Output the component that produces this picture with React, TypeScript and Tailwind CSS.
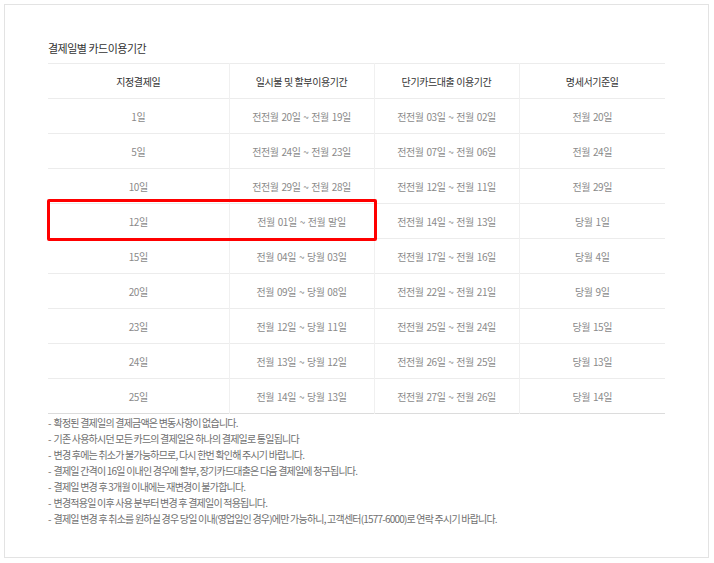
const headers = ['지정결제일', '일시불 및 할부이용기간', '단기카드대출 이용기간', '명세서기준일'];

const rows = [
    ['1일', '전전월 20일 ~ 전월 19일', '전전월 03일 ~ 전월 02일', '전월 20일'],
    ['5일', '전전월 24일 ~ 전월 23일', '전전월 07일 ~ 전월 06일', '전월 24일'],
    ['10일', '전전월 29일 ~ 전월 28일', '전전월 12일 ~ 전월 11일', '전월 29일'],
    ['12일', '전월 01일 ~ 전월 말일', '전전월 14일 ~ 전월 13일', '당월 1일'],
    ['15일', '전월 04일 ~ 당월 03일', '전전월 17일 ~ 전월 16일', '당월 4일'],
    ['20일', '전월 09일 ~ 당월 08일', '전전월 22일 ~ 전월 21일', '당월 9일'],
    ['23일', '전월 12일 ~ 당월 11일', '전전월 25일 ~ 전월 24일', '당월 15일'],
    ['24일', '전월 13일 ~ 당월 12일', '전전월 26일 ~ 전월 25일', '당월 13일'],
    ['25일', '전월 14일 ~ 당월 13일', '전전월 27일 ~ 전월 26일', '당월 14일'],
];

const notes = [
    '확정된 결제일의 결제금액은 변동사항이 없습니다.',
    '기존 사용하시던 모든 카드의 결제일은 하나의 결제일로 통일됩니다',
    '변경 후에는 취소가 불가능하므로, 다시 한번 확인해 주시기 바랍니다.',
    '결제일 간격이 16일 이내인 경우에 할부, 장기카드대출은 다음 결제일에 청구됩니다.',
    '결제일 변경 후 3개월 이내에는 재변경이 불가합니다.',
    '변경적용일 이후 사용 분부터 변경 후 결제일이 적용됩니다.',
    '결제일 변경 후 취소를 원하실 경우 당일 이내(영업일인 경우)에만 가능하니, 고객센터(1577-6000)로 연락 주시기 바랍니다.',
];

const colWidths = ['w-[181px]', 'w-[145px]', 'w-[145px]', 'w-[146px]'];

export default function App() {
    return (
        <div className="p-1 bg-white font-['Noto_Sans_CJK_KR','Noto_Sans',sans-serif]">
            <div className="h-[554px] w-[705px] border border-[#e3e3e3] pl-[43px] pt-[31px]">
                <h2 className="text-[11px] leading-[24px] text-[#333] tracking-[-0.5px]">결제일별 카드이용기간</h2>

                <div className="relative mt-[3px] w-[617px]">
                    <table className="w-full table-fixed border-collapse border-t border-b border-t-[#ececec] border-b-[#dcdcdc]">
                        <thead>
                            <tr className="h-[35px] border-b border-[#ececec]">
                                {headers.map((header, i) => (
                                    <th
                                        key={header}
                                        className={`${colWidths[i]} border-l border-[#f0f0f0] first:border-l-0 text-center text-[10px] font-normal text-[#333] tracking-[-0.4px]`}>
                                        {header}
                                    </th>
                                ))}
                            </tr>
                        </thead>
                        <tbody>
                            {rows.map((row, r) => (
                                <tr key={row[0]} className={`h-[35px] ${r < rows.length - 1 ? 'border-b border-[#ececec]' : ''}`}>
                                    {row.map((cell, i) => (
                                        <td
                                            key={i}
                                            className="border-l border-[#f0f0f0] first:border-l-0 text-center text-[10px] text-[#8a8a8a] tracking-[-0.4px] [word-spacing:1px]">
                                            {cell}
                                        </td>
                                    ))}
                                </tr>
                            ))}
                        </tbody>
                    </table>

                    {/* highlighted row */}
                    <div className="absolute left-[-1px] top-[136px] h-[42px] w-[330px] rounded-[2px] border-[3px] border-[#ff0000]" />
                </div>

                <ul className="mt-[1px] text-[10px] leading-[16px] text-[#6f6f6f] tracking-[-0.8px]">
                    {notes.map((note) => (
                        <li key={note}>-&nbsp; {note}</li>
                    ))}
                </ul>
            </div>
        </div>
    );
}
